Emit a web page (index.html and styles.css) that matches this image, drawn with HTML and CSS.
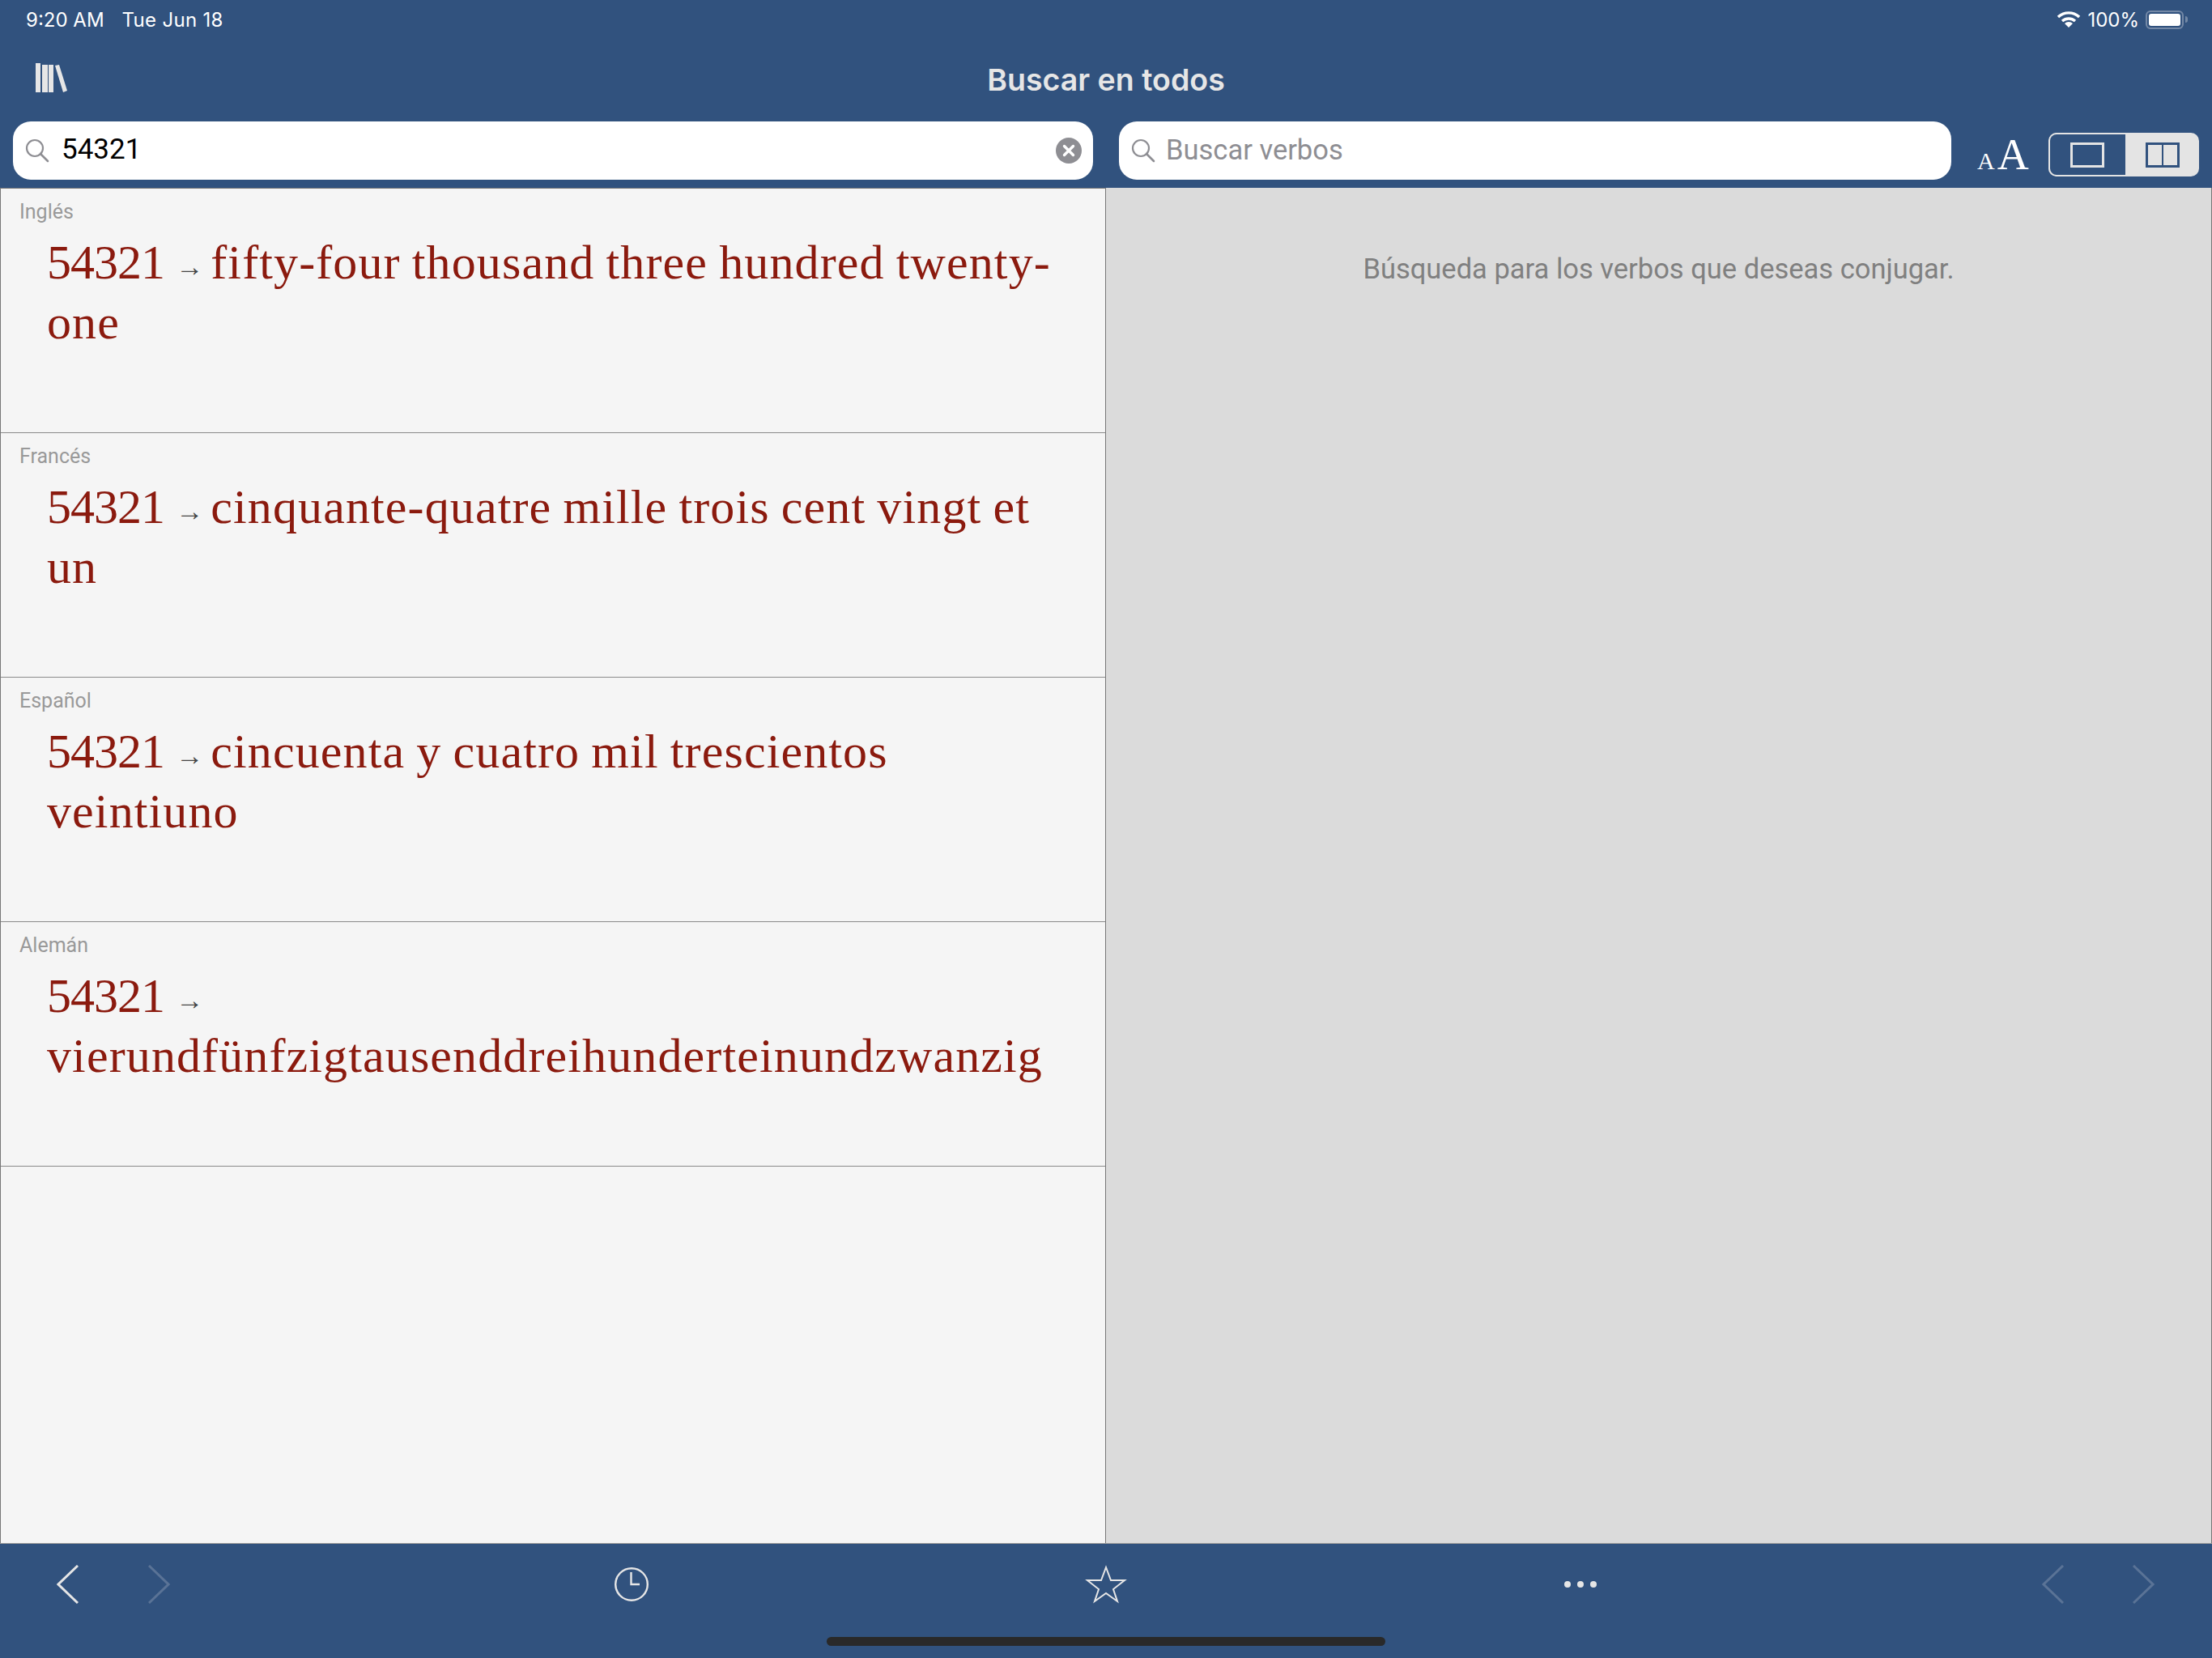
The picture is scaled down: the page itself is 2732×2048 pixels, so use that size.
FILE: index.html
```html
<!DOCTYPE html>
<html lang="es">
<head>
    <meta charset="UTF-8">
    <title>Buscar en todos</title>
    <link rel="stylesheet" href="styles.css">
</head>
<body>
    <div class="app">
        <!-- Status bar -->
        <div class="status-bar">
            <span class="status-time">9:20 AM</span>
            <span class="status-date">Tue Jun 18</span>
            <svg class="wifi" width="28" height="20" viewBox="0 0 28 20">
                <path d="M1 7 A19 19 0 0 1 27 7" fill="none" stroke="#fff" stroke-width="3.4"/>
                <path d="M6 12 A12 12 0 0 1 22 12" fill="none" stroke="#fff" stroke-width="3.4"/>
                <path d="M14 20 L9 15 A7 7 0 0 1 19 15 Z" fill="#fff"/>
            </svg>
            <span class="status-battery-text">100%</span>
            <span class="battery"><span class="battery-fill"></span></span>
            <span class="battery-cap"></span>
        </div>

        <!-- Title bar -->
        <div class="title-bar">
            <svg class="library-icon" width="39" height="36" viewBox="0 0 39 36">
                <rect x="0" y="0" width="6" height="36" fill="#e6e6e6"/>
                <rect x="8" y="2" width="7" height="34" fill="#e6e6e6"/>
                <rect x="16" y="2" width="6" height="34" fill="#e6e6e6"/>
                <path d="M24 3 L29 2 L39 34 L34 36 Z" fill="#e6e6e6"/>
            </svg>
            <div class="title">Buscar en todos</div>
        </div>

        <!-- Search row -->
        <div class="search-row">
            <div class="search-field search-main">
                <svg class="search-icon" width="30" height="30" viewBox="0 0 30 30">
                    <circle cx="12" cy="12" r="10" fill="none" stroke="#8e8e93" stroke-width="2.2"/>
                    <path d="M19 19 L28 28" stroke="#8e8e93" stroke-width="2.6" stroke-linecap="round"/>
                </svg>
                <span class="search-value">54321</span>
                <svg class="clear-icon" width="32" height="32" viewBox="0 0 32 32">
                    <circle cx="16" cy="16" r="16" fill="#8e8e93"/>
                    <path d="M10.5 10.5 L21.5 21.5 M21.5 10.5 L10.5 21.5" stroke="#fff" stroke-width="3.4" stroke-linecap="round"/>
                </svg>
            </div>
            <div class="search-field search-verbs">
                <svg class="search-icon" width="30" height="30" viewBox="0 0 30 30">
                    <circle cx="12" cy="12" r="10" fill="none" stroke="#8e8e93" stroke-width="2.2"/>
                    <path d="M19 19 L28 28" stroke="#8e8e93" stroke-width="2.6" stroke-linecap="round"/>
                </svg>
                <span class="search-placeholder">Buscar verbos</span>
            </div>
            <div class="font-size-btn"><span class="small-a">A</span><span class="big-a">A</span></div>
            <div class="segmented">
                <div class="segment segment-on"><span class="single-pane"></span></div>
                <div class="segment"><span class="double-pane"></span></div>
            </div>
        </div>

        <!-- Main panels -->
        <div class="panels">
            <div class="panel-left">
                <div class="result">
                    <div class="result-lang">Inglés</div>
                    <div class="result-text"><span class="term">54321</span> <span class="arrow">→</span> fifty-four thousand three hundred twenty-one</div>
                </div>
                <div class="result">
                    <div class="result-lang">Francés</div>
                    <div class="result-text"><span class="term">54321</span> <span class="arrow">→</span> cinquante-quatre mille trois cent vingt et un</div>
                </div>
                <div class="result">
                    <div class="result-lang">Español</div>
                    <div class="result-text"><span class="term">54321</span> <span class="arrow">→</span> cincuenta y cuatro mil trescientos veintiuno</div>
                </div>
                <div class="result">
                    <div class="result-lang">Alemán</div>
                    <div class="result-text"><span class="term">54321</span> <span class="arrow">→</span> vierundfünfzigtausenddreihunderteinundzwanzig</div>
                </div>
            </div>
            <div class="panel-right">
                <div class="verbs-hint">Búsqueda para los verbos que deseas conjugar.</div>
            </div>
        </div>

        <!-- Bottom toolbar -->
        <div class="toolbar">
            <div class="toolbar-icons">
                <svg class="tb-back" width="27" height="48" viewBox="0 0 27 48"><path d="M26 1 L2 24 L26 47" fill="none" stroke="#e6e6e6" stroke-width="3"/></svg>
                <svg class="tb-forward" width="27" height="48" viewBox="0 0 27 48"><path d="M1 1 L25 24 L1 47" fill="none" stroke="#5a7396" stroke-width="3"/></svg>
                <svg class="tb-clock" width="42" height="42" viewBox="0 0 42 42">
                    <circle cx="21" cy="21" r="19.8" fill="none" stroke="#e6e6e6" stroke-width="2.4"/>
                    <path d="M20.5 6 L20.5 21 L31 21" fill="none" stroke="#e6e6e6" stroke-width="2.4"/>
                </svg>
                <svg class="tb-star" width="52" height="48" viewBox="0 0 52 48">
                    <path d="M26 3 L32 19 L49 19 L35 30 L40 45 L26 35 L12 45 L17 30 L3 19 L20 19 Z" fill="none" stroke="#e6e6e6" stroke-width="2"/>
                </svg>
                <div class="tb-dots"><span></span><span></span><span></span></div>
                <svg class="tb-prev" width="27" height="48" viewBox="0 0 27 48"><path d="M26 1 L2 24 L26 47" fill="none" stroke="#5a7396" stroke-width="3"/></svg>
                <svg class="tb-next" width="27" height="48" viewBox="0 0 27 48"><path d="M1 1 L25 24 L1 47" fill="none" stroke="#5a7396" stroke-width="3"/></svg>
            </div>
            <div class="home-bar"></div>
        </div>
    </div>
</body>
</html>
```
FILE: styles.css
```css
body {
    margin: 0;
    padding: 0;
    font-family: Inter, "Noto Sans", sans-serif;
    background-color: #31527e;
}

.app {
    width: 2732px;
    height: 2048px;
    display: flex;
    flex-direction: column;
    overflow: hidden;
    background-color: #31527e;
}

/* Status bar */
.status-bar {
    height: 48px;
    display: flex;
    align-items: center;
    padding: 0 30px 0 32px;
    color: #fff;
    font-size: 24px;
    flex-shrink: 0;
}

.status-date {
    margin-left: 22px;
    letter-spacing: 0.3px;
    flex: 1;
}

.wifi {
    margin-right: 9px;
    margin-left: 2px;
}

.status-battery-text {
    margin-right: 8px;
}

.battery {
    width: 47px;
    height: 23px;
    box-sizing: border-box;
    border: 2px solid #7388a6;
    border-radius: 6px;
    padding: 2px;
    display: flex;
}

.battery-fill {
    flex: 1;
    background-color: #fff;
    border-radius: 3px;
}

.battery-cap {
    width: 3px;
    height: 8px;
    margin-left: 2px;
    background-color: #7388a6;
    border-radius: 0 3px 3px 0;
}

/* Title bar */
.title-bar {
    height: 102px;
    display: flex;
    align-items: center;
    position: relative;
    flex-shrink: 0;
}

.library-icon {
    margin-left: 44px;
    margin-bottom: 6px;
}

.title {
    position: absolute;
    left: 0;
    right: 0;
    text-align: center;
    color: #e6e6e6;
    font-size: 37.5px;
    font-weight: 600;
    margin-bottom: 2px;
}

/* Search row */
.search-row {
    height: 82px;
    display: flex;
    align-items: flex-start;
    padding-left: 16px;
    flex-shrink: 0;
}

.search-field {
    height: 72px;
    background-color: #fff;
    border-radius: 22px;
    display: flex;
    align-items: center;
    box-sizing: border-box;
}

.search-main {
    width: 1334px;
    padding: 0 14px 0 15px;
}

.search-verbs {
    width: 1028px;
    margin-left: 32px;
    padding: 0 14px 0 15px;
}

.search-value {
    flex: 1;
    margin: 0 0 3px 15px;
    font-size: 35px;
    color: #000;
    font-family: Roboto, sans-serif;
}

.search-placeholder {
    margin: 0 0 3px 13px;
    font-size: 34.5px;
    color: #8e8e93;
    font-family: Roboto, sans-serif;
}

.font-size-btn {
    margin-left: 32px;
    margin-top: 5px;
    width: 63px;
    height: 72px;
    display: flex;
    align-items: baseline;
    font-family: "Liberation Serif", serif;
    color: #fff;
    line-height: 72px;
}

.small-a {
    font-size: 30px;
}

.big-a {
    font-size: 54px;
    margin-left: 3px;
}

.segmented {
    margin-left: 25px;
    margin-top: 14px;
    width: 186px;
    height: 54px;
    display: flex;
    border-radius: 10px;
    background-color: #e4e4e4;
    overflow: hidden;
}

.segment {
    flex: 1;
    display: flex;
    align-items: center;
    justify-content: center;
}

.segment-on {
    background-color: #31527e;
    border: 2px solid #e4e4e4;
    border-right: none;
    border-radius: 10px 0 0 10px;
    padding-right: 2px;
    box-sizing: border-box;
}

.single-pane {
    width: 42px;
    height: 31px;
    box-sizing: border-box;
    border: 3px solid #e4e4e4;
}

.double-pane {
    width: 42px;
    height: 31px;
    box-sizing: border-box;
    border: 3px solid #31527e;
    background: linear-gradient(#31527e, #31527e) center / 2px 100% no-repeat;
}

/* Panels */
.panels {
    flex: 1;
    display: flex;
    min-height: 0;
    border-bottom: 1px solid #999;
}

.panel-left {
    width: 1366px;
    box-sizing: border-box;
    background-color: #f5f5f5;
    border-left: 1px solid #777;
    border-right: 1px solid #777;
    border-top: 1px solid #777;
}

.panel-right {
    flex: 1;
    background-color: #dbdbdb;
    border-right: 1px solid #777;
    text-align: center;
}

.result {
    height: 302px;
    box-sizing: border-box;
    border-bottom: 1px solid #8a8a8a;
    padding: 15px 50px 0 23px;
}

.result-lang {
    font-size: 25px;
    color: #999;
    line-height: 28px;
    font-family: Roboto, sans-serif;
}

.result-text {
    margin: 11px 0 0 34px;
    font-family: "Liberation Serif", serif;
    font-size: 60px;
    line-height: 74px;
    letter-spacing: 1.12px;
    word-spacing: -2px;
    color: #8b1a0e;
}

.term {
    letter-spacing: -1px;
}

.arrow {
    font-family: "Liberation Serif", serif;
    font-size: 34px;
    line-height: 1;
    letter-spacing: 0;
    color: #444;
    margin-right: -5px;
    vertical-align: 3px;
}

.verbs-hint {
    margin-top: 80px;
    font-size: 34.5px;
    color: #808080;
    font-family: Roboto, sans-serif;
}

/* Toolbar */
.toolbar {
    height: 141px;
    flex-shrink: 0;
    display: flex;
    flex-direction: column;
    align-items: center;
}

.toolbar-icons {
    width: 100%;
    height: 100px;
    margin-bottom: 15px;
    display: flex;
    align-items: center;
    flex-shrink: 0;
}

.tb-back {
    margin-left: 70px;
}

.tb-forward {
    margin-left: 86px;
}

.tb-clock {
    margin-left: 549px;
}

.tb-star {
    margin-left: 539px;
}

.tb-dots {
    margin-left: 540px;
    display: flex;
    gap: 8px;
}

.tb-dots span {
    width: 8px;
    height: 8px;
    border-radius: 50%;
    background-color: #e6e6e6;
}

.tb-prev {
    margin-left: 550px;
}

.tb-next {
    margin-left: 85px;
}

.home-bar {
    width: 690px;
    height: 11px;
    border-radius: 6px;
    background-color: #292929;
}
```
